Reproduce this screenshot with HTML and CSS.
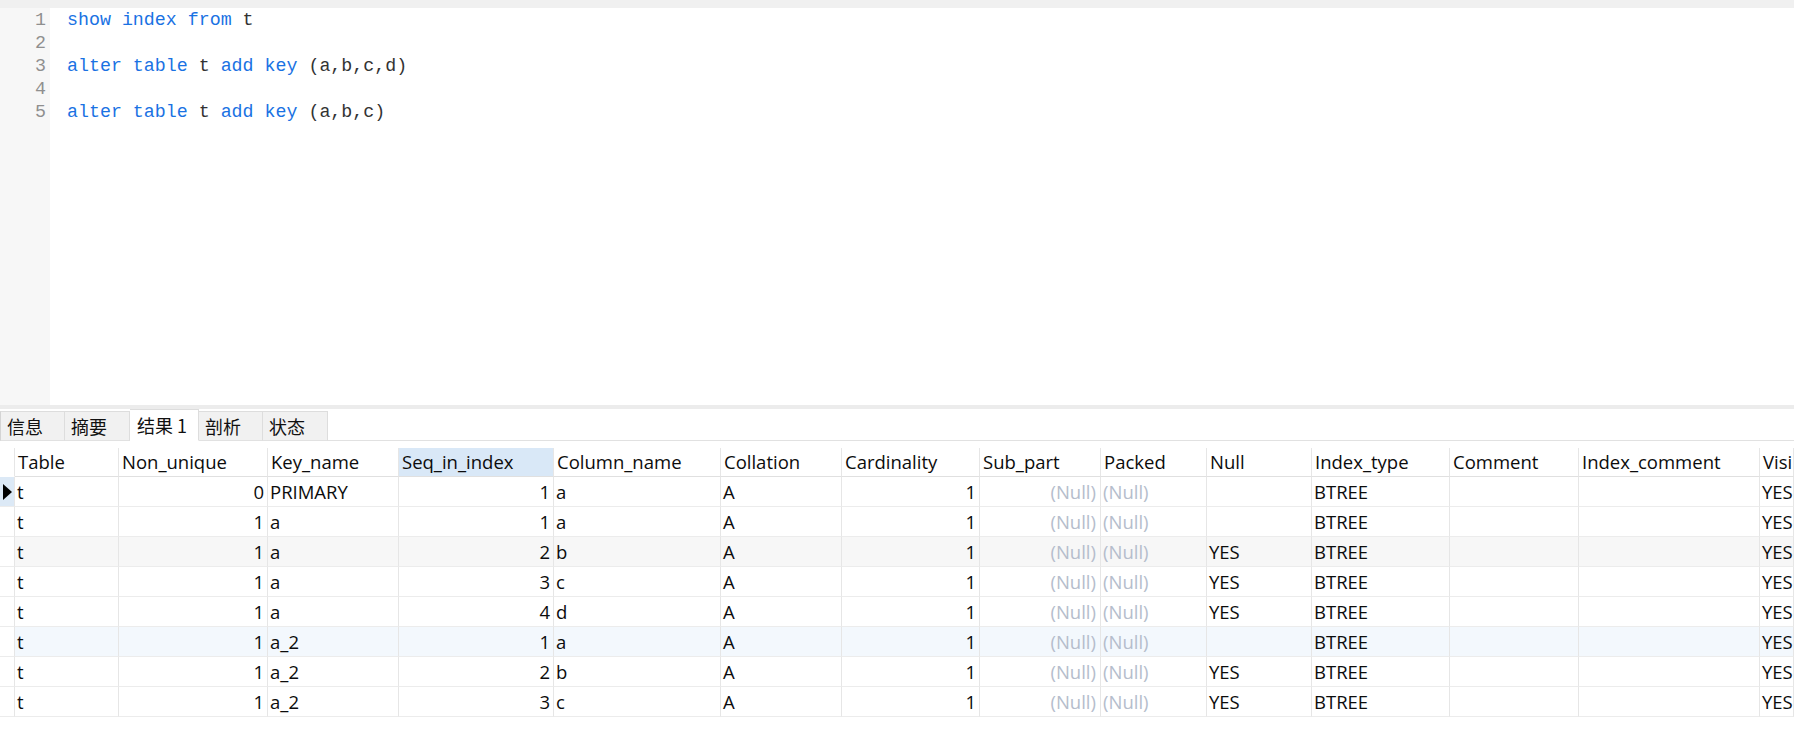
FILE: index.html
```html
<!DOCTYPE html>
<html>
<head>
<meta charset="utf-8">
<link rel="stylesheet" href="styles.css">
</head>
<body>
<div class="topbar"></div>
<div class="editor">
  <div class="gutter">
    <div class="ln">1</div>
    <div class="ln">2</div>
    <div class="ln">3</div>
    <div class="ln">4</div>
    <div class="ln">5</div>
  </div>
  <div class="code">
    <div class="line"><span class="kw">show</span> <span class="kw">index</span> <span class="kw">from</span> t</div>
    <div class="line">&nbsp;</div>
    <div class="line"><span class="kw">alter</span> <span class="kw">table</span> t <span class="kw">add</span> <span class="kw">key</span> (a,b,c,d)</div>
    <div class="line">&nbsp;</div>
    <div class="line"><span class="kw">alter</span> <span class="kw">table</span> t <span class="kw">add</span> <span class="kw">key</span> (a,b,c)</div>
  </div>
</div>
<div class="splitter"></div>
<div class="tabs">
  <div class="tab first">信息</div>
  <div class="tab">摘要</div>
  <div class="tab active">结果 1</div>
  <div class="tab">剖析</div>
  <div class="tab">状态</div>
</div>
<div class="grid">
  <div class="row head">
    <div class="c ind"></div>
    <div class="c">Table</div>
    <div class="c">Non_unique</div>
    <div class="c">Key_name</div>
    <div class="c sel">Seq_in_index</div>
    <div class="c">Column_name</div>
    <div class="c">Collation</div>
    <div class="c">Cardinality</div>
    <div class="c">Sub_part</div>
    <div class="c">Packed</div>
    <div class="c">Null</div>
    <div class="c">Index_type</div>
    <div class="c">Comment</div>
    <div class="c">Index_comment</div>
    <div class="c last">Visible</div>
  </div>
  <div class="row">
    <div class="c ind cur"><span class="arrow"></span></div>
    <div class="c">t</div><div class="c r">0</div><div class="c">PRIMARY</div><div class="c r">1</div><div class="c">a</div><div class="c">A</div><div class="c r">1</div><div class="c r nul">(Null)</div><div class="c nul">(Null)</div><div class="c"></div><div class="c">BTREE</div><div class="c"></div><div class="c"></div><div class="c last">YES</div>
  </div>
  <div class="row">
    <div class="c ind"></div>
    <div class="c">t</div><div class="c r">1</div><div class="c">a</div><div class="c r">1</div><div class="c">a</div><div class="c">A</div><div class="c r">1</div><div class="c r nul">(Null)</div><div class="c nul">(Null)</div><div class="c"></div><div class="c">BTREE</div><div class="c"></div><div class="c"></div><div class="c last">YES</div>
  </div>
  <div class="row hover">
    <div class="c ind"></div>
    <div class="c">t</div><div class="c r">1</div><div class="c">a</div><div class="c r">2</div><div class="c">b</div><div class="c">A</div><div class="c r">1</div><div class="c r nul">(Null)</div><div class="c nul">(Null)</div><div class="c">YES</div><div class="c">BTREE</div><div class="c"></div><div class="c"></div><div class="c last">YES</div>
  </div>
  <div class="row">
    <div class="c ind"></div>
    <div class="c">t</div><div class="c r">1</div><div class="c">a</div><div class="c r">3</div><div class="c">c</div><div class="c">A</div><div class="c r">1</div><div class="c r nul">(Null)</div><div class="c nul">(Null)</div><div class="c">YES</div><div class="c">BTREE</div><div class="c"></div><div class="c"></div><div class="c last">YES</div>
  </div>
  <div class="row">
    <div class="c ind"></div>
    <div class="c">t</div><div class="c r">1</div><div class="c">a</div><div class="c r">4</div><div class="c">d</div><div class="c">A</div><div class="c r">1</div><div class="c r nul">(Null)</div><div class="c nul">(Null)</div><div class="c">YES</div><div class="c">BTREE</div><div class="c"></div><div class="c"></div><div class="c last">YES</div>
  </div>
  <div class="row tint">
    <div class="c ind"></div>
    <div class="c">t</div><div class="c r">1</div><div class="c">a_2</div><div class="c r">1</div><div class="c">a</div><div class="c">A</div><div class="c r">1</div><div class="c r nul">(Null)</div><div class="c nul">(Null)</div><div class="c"></div><div class="c">BTREE</div><div class="c"></div><div class="c"></div><div class="c last">YES</div>
  </div>
  <div class="row">
    <div class="c ind"></div>
    <div class="c">t</div><div class="c r">1</div><div class="c">a_2</div><div class="c r">2</div><div class="c">b</div><div class="c">A</div><div class="c r">1</div><div class="c r nul">(Null)</div><div class="c nul">(Null)</div><div class="c">YES</div><div class="c">BTREE</div><div class="c"></div><div class="c"></div><div class="c last">YES</div>
  </div>
  <div class="row">
    <div class="c ind"></div>
    <div class="c">t</div><div class="c r">1</div><div class="c">a_2</div><div class="c r">3</div><div class="c">c</div><div class="c">A</div><div class="c r">1</div><div class="c r nul">(Null)</div><div class="c nul">(Null)</div><div class="c">YES</div><div class="c">BTREE</div><div class="c"></div><div class="c"></div><div class="c last">YES</div>
  </div>
</div>
</body>
</html>
```
FILE: styles.css
```css
html, body {
  margin: 0;
  padding: 0;
  background: #ffffff;
}
body {
  width: 1794px;
  height: 733px;
  overflow: hidden;
}
.topbar {
  height: 8px;
  background: #f0f0f0;
}
.editor {
  height: 397px;
  display: flex;
  background: #ffffff;
}
.gutter {
  width: 50px;
  box-sizing: border-box;
  background: #f7f7f7;
  padding: 1px 4px 0 0;
  text-align: right;
  font-family: "Liberation Mono", monospace;
  font-size: 18.3px;
  line-height: 23px;
  color: #8f8f8f;
}
.code {
  flex: 1;
  padding: 1px 0 0 17px;
  font-family: "Liberation Mono", monospace;
  font-size: 18.3px;
  line-height: 23px;
  color: #333333;
}
.line {
  white-space: pre;
  height: 23px;
}
.kw {
  color: #1a72e3;
}
.splitter {
  height: 4px;
  background: #ececec;
}
.tabs {
  height: 31px;
  display: flex;
  align-items: flex-end;
  border-bottom: 1px solid #e1e1e1;
  font-family: "Noto Sans CJK SC", "Open Sans", sans-serif;
  font-size: 18px;
  color: #111111;
}
.tab {
  height: 30px;
  box-sizing: border-box;
  background: #f1f1f1;
  border-top: 1px solid #dddddd;
  border-right: 1px solid #dddddd;
  padding: 0 0 0 6px;
  line-height: 28px;
  width: 65px;
  margin-bottom: -1px;
  border-bottom: 1px solid #e1e1e1;
}
.tab.first {
  border-left: 1px solid #d4d4d4;
}
.tab.active {
  height: 32px;
  width: 69px;
  background: #ffffff;
  border-bottom-color: #ffffff;
  padding-left: 7px;
  line-height: 30px;
}
.tab:nth-child(4) {
  width: 64px;
}
.grid {
  margin-top: 7px;
  font-family: "Open Sans", "Noto Sans CJK SC", sans-serif;
  font-size: 18.5px;
  color: #0c0c0c;
}
.row {
  display: grid;
  grid-template-columns: 15px 104px 149px 131px 155px 167px 121px 138px 121px 106px 105px 138px 129px 181px 34px;
  height: 30px;
}
.row.head {
  height: 29px;
}
.c {
  box-sizing: border-box;
  border-right: 1px solid #e6e6e6;
  border-bottom: 1px solid #ececec;
  padding: 1px 2px 0 2px;
  line-height: 27px;
  white-space: nowrap;
  overflow: hidden;
}
.head .c {
  border-bottom: 1px solid #e0e0e0;
  line-height: 26px;
  padding-left: 3px;
}
.head .c.ind {
  border-bottom-color: #ffffff;
}
.c.last {
  border-right: 1px solid #e6e6e6;
}
.c.r {
  text-align: right;
  padding-right: 3px;
}
.c.sel {
  background: #d9e8f7;
}
.c.nul {
  color: #b5bdcc;
}
.c.r.nul {
  padding-right: 4px;
}
.c.ind {
  padding: 0;
  position: relative;
}
.c.ind.cur {
  background: #dce9f6;
}
.arrow {
  position: absolute;
  left: 3px;
  top: 7px;
  width: 0;
  height: 0;
  border-top: 8px solid transparent;
  border-bottom: 8px solid transparent;
  border-left: 9px solid #000000;
}
.row.hover .c {
  background: #f7f7f7;
}
.row.hover .c.ind {
  background: #ffffff;
}
.row.tint .c {
  background: #f3f8fd;
}
.row.tint .c.ind {
  background: #ffffff;
}
```
